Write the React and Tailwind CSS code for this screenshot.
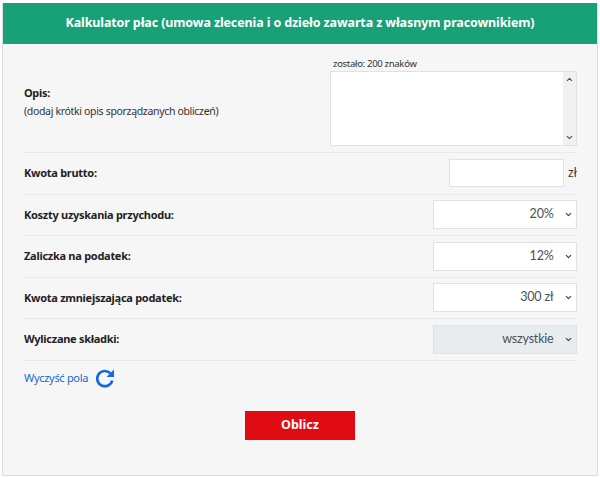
import React from "react";
import { ChevronDown, ChevronUp } from "lucide-react";

function Sel({ value, disabled }) {
  return (
    <div className="relative w-[144.5px] h-[29px]">
      <select
        defaultValue={value}
        disabled={disabled}
        className={`appearance-none w-full h-full border border-[#dfe1e3] pr-[22.5px] pl-2 text-[12.5px] tracking-[-0.2px] text-[#495057] [font-family:Lato,sans-serif] [text-align-last:right] ${disabled ? "bg-[#e9ecef]" : "bg-white"}`}
      >
        <option>{value}</option>
      </select>
      <ChevronDown className="absolute right-[4px] top-[10px] w-[9px] h-[9px] text-[#343a40] pointer-events-none" strokeWidth={2.8} />
    </div>
  );
}

function Row({ label, children }) {
  return (
    <div className="h-[41.5px] border-t border-[#e8e8e8] flex items-center justify-between">
      <b className="text-[11px] tracking-[-0.28px] text-[#222]">{label}</b>
      {children}
    </div>
  );
}

export default function App() {
  return (
    <div className="w-[600px] h-[477px] bg-white pt-[3px] px-[2px] pb-[1px] [font-family:'Noto_Sans',sans-serif]">
      <div className="h-[473px] border-x border-b border-[#dddddd] bg-[#f6f6f6] flex flex-col">
        <div className="h-[41px] bg-[#18a077] flex items-center justify-center text-white font-bold text-[12.5px] tracking-[-0.12px]">
          Kalkulator płac (umowa zlecenia i o dzieło zawarta z własnym pracownikiem)
        </div>
        <div className="pl-[21px] pr-[20px]">
          <div className="h-[108px] flex justify-between">
            <div className="pt-[40px] text-[10.5px] tracking-[-0.33px] text-[#333]">
              <b className="block text-[11px] text-[#222] leading-[18px]">Opis:</b>
              <div className="leading-[19px]">(dodaj krótki opis sporządzanych obliczeń)</div>
            </div>
            <div className="w-[247px] pt-[13px]">
              <div className="text-[9.5px] tracking-[-0.3px] leading-[14px] pl-[3px] text-[#333]">zostało: 200 znaków</div>
              <div className="relative h-[75px]">
                <textarea className="w-full h-full block border border-[#dfe1e3] bg-white resize-none overflow-hidden outline-none"></textarea>
                <div className="absolute right-[1px] top-[1px] bottom-[1px] w-[13px] bg-[#f1f1f1] flex flex-col justify-between items-center py-[3px] pointer-events-none">
                  <ChevronUp className="w-[9px] h-[9px] text-[#505050]" strokeWidth={3} />
                  <ChevronDown className="w-[9px] h-[9px] text-[#505050]" strokeWidth={3} />
                </div>
              </div>
            </div>
          </div>
          <Row label="Kwota brutto:">
            <div className="flex items-center">
              <input className="w-[115px] h-[28px] border border-[#dfe1e3] bg-white outline-none" />
              <span className="w-[13px] pl-[4px] text-[12px] text-[#333]">zł</span>
            </div>
          </Row>
          <Row label="Koszty uzyskania przychodu:"><Sel value="20%" /></Row>
          <Row label="Zaliczka na podatek:"><Sel value="12%" /></Row>
          <Row label="Kwota zmniejszająca podatek:"><Sel value="300 zł" /></Row>
          <Row label="Wyliczane składki:"><Sel value="wszystkie" disabled /></Row>
          <div className="border-t border-[#e8e8e8] flex items-center h-[36px]">
            <a className="text-[11px] tracking-[-0.3px] text-[#1668d8]">Wyczyść pola</a>
            <svg className="ml-[7px] w-[20px] h-[20px] text-[#1268e0]" viewBox="0 0 20 20" fill="none">
              <path d="M15.2 5.2A7.6 7.6 0 1 0 17.2 12.5" stroke="currentColor" strokeWidth="2.7" />
              <path d="M19 1.5V9h-7.5z" fill="currentColor" />
            </svg>
          </div>
          <div className="flex justify-center pt-[15px]">
            <button className="w-[110px] h-[29px] bg-[#e10b13] text-white font-bold text-[12.5px] [font-family:'Noto_Sans',sans-serif] ml-[-1px]">Oblicz</button>
          </div>
        </div>
      </div>
    </div>
  );
}
